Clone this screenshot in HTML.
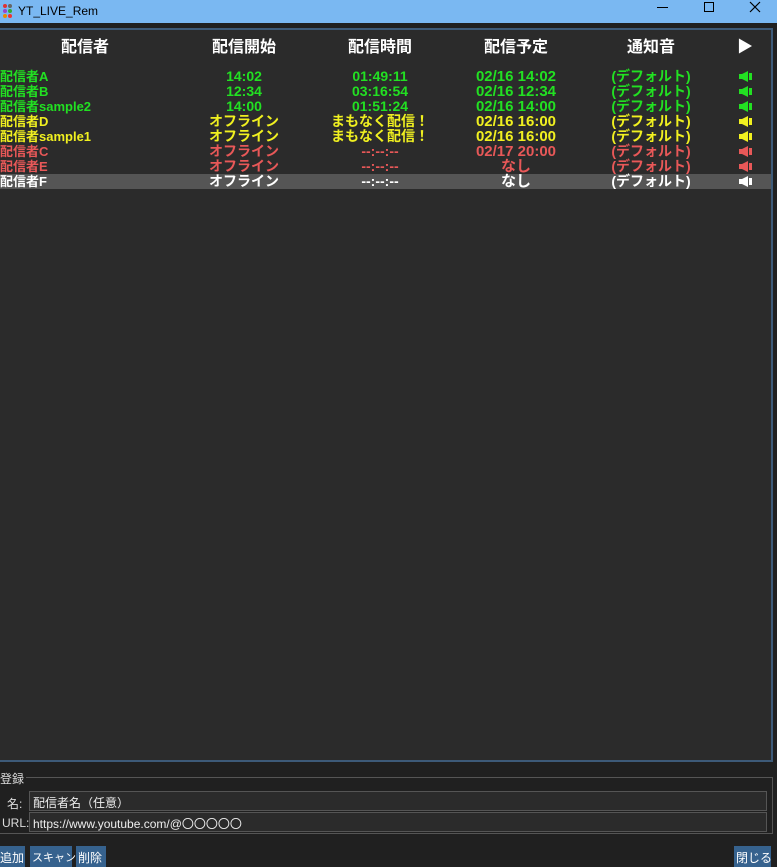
<!DOCTYPE html><html><head><meta charset="utf-8"><style>
*{margin:0;padding:0;box-sizing:border-box}
body{width:777px;height:867px;background:#202020;font-family:"Liberation Sans","Noto Sans CJK JP",sans-serif;position:relative;overflow:hidden;color:#fff}
.tb{position:absolute;left:0;top:0;width:777px;height:23px;background:#7ab8f2;color:#000;font-size:12px}
.tb .t{position:absolute;left:18px;top:4px}
.panel{position:absolute;left:-2px;top:28px;width:775px;height:734px;background:#2b2b2b;border:2px solid #3d5a78}
.c{position:absolute;font-weight:bold;font-size:14px;white-space:nowrap;text-align:center;line-height:15px}
.h{font-size:16px;top:39px;line-height:18px}
.g{color:#22e022}.y{color:#f0f020}.r{color:#e85858}.w{color:#fff}
.sel{position:absolute;left:0;top:174px;width:771px;height:15px;background:#555}
.grp{position:absolute;left:0;top:777px;width:773px;height:57px;border:1px solid #555;border-left:none}
.lbl{position:absolute;font-size:12px;color:#ddd}
.in{position:absolute;left:29px;width:738px;height:20px;background:#2b2b2b;border:1px solid #555;font-size:12px;color:#eee;padding:2px 3px}
.btn{position:absolute;top:846px;height:21px;background:#36628e;color:#fff;font-size:12px;padding:3px 2px;white-space:nowrap}
</style></head><body>
<div class="tb"><svg style="position:absolute;left:3px;top:4px" width="10" height="14"><circle cx="2" cy="2" r="2" fill="#d33"/><circle cx="7" cy="2" r="2" fill="#666"/><circle cx="2" cy="7" r="2" fill="#94c"/><circle cx="7" cy="7" r="2" fill="#3a3"/><circle cx="2" cy="12" r="2" fill="#e80"/><circle cx="7" cy="12" r="2" fill="#e33"/></svg><span class="t">YT_LIVE_Rem</span>
<div style="position:absolute;left:657px;top:7px;width:11px;height:1px;background:#000"></div>
<div style="position:absolute;left:704px;top:2px;width:10px;height:10px;border:1px solid #000"></div>
<svg style="position:absolute;left:749px;top:1px" width="12" height="12"><path d="M1 1L11 11M11 1L1 11" stroke="#000" stroke-width="1.2"/></svg></div>
<div class="panel"></div>
<div class="sel"></div>
<div class="c h" style="left:45px;width:80px">配信者</div>
<div class="c h" style="left:204px;width:80px">配信開始</div>
<div class="c h" style="left:340px;width:80px">配信時間</div>
<div class="c h" style="left:476px;width:80px">配信予定</div>
<div class="c h" style="left:611px;width:80px">通知音</div>
<div class="c h" style="left:735px;width:20px">▶</div>
<div id="rows"></div>
<div class="grp"></div>
<div class="lbl" style="left:0;top:770px;background:#202020;padding-right:2px">登録</div>
<div class="lbl" style="left:7px;top:795px">名:</div>
<div class="lbl" style="left:2px;top:816px">URL:</div>
<div class="in" style="top:791px">配信者名（任意）</div>
<div class="in" style="top:812px">https://www.youtube.com/@〇〇〇〇〇</div>
<div class="btn" style="left:-2px;width:27px">追加</div>
<div class="btn" style="left:30px;width:42px;font-size:11px">スキャン</div>
<div class="btn" style="left:76px;width:30px">削除</div>
<div class="btn" style="left:734px;width:37px">閉じる</div>
<script>
var col={g:"#22e022",y:"#f0f020",r:"#e85858",w:"#fff"};
var d=[["配信者A","14:02","01:49:11","02/16 14:02","g"],["配信者B","12:34","03:16:54","02/16 12:34","g"],["配信者sample2","14:00","01:51:24","02/16 14:00","g"],["配信者D","オフライン","まもなく配信！","02/16 16:00","y"],["配信者sample1","オフライン","まもなく配信！","02/16 16:00","y"],["配信者C","オフライン","--:--:--","02/17 20:00","r"],["配信者E","オフライン","--:--:--","なし","r"],["配信者F","オフライン","--:--:--","なし","w"]];
var h="";d.forEach(function(r,i){var t=69+i*15,k=r[4];
h+='<div class="c '+k+'" style="left:0;top:'+t+'px;text-align:left;font-size:13px">'+r[0]+'</div>';
h+='<div class="c '+k+'" style="left:194px;width:100px;top:'+t+'px">'+r[1]+'</div>';
h+='<div class="c '+k+'" style="left:310px;width:140px;top:'+t+'px">'+r[2]+'</div>';
h+='<div class="c '+k+'" style="left:446px;width:140px;top:'+t+'px;font-size:15px">'+r[3]+'</div>';
h+='<div class="c '+k+'" style="left:591px;width:120px;top:'+t+'px">(デフォルト)</div>';
h+='<svg style="position:absolute;left:739px;top:'+(t+2)+'px" width="13" height="11"><path d="M0 3H3L9 0V11L3 8H0Z M10 2H13V9H10Z" fill="'+col[k]+'"/></svg>';});
document.getElementById("rows").innerHTML=h;
</script>
</body></html>
